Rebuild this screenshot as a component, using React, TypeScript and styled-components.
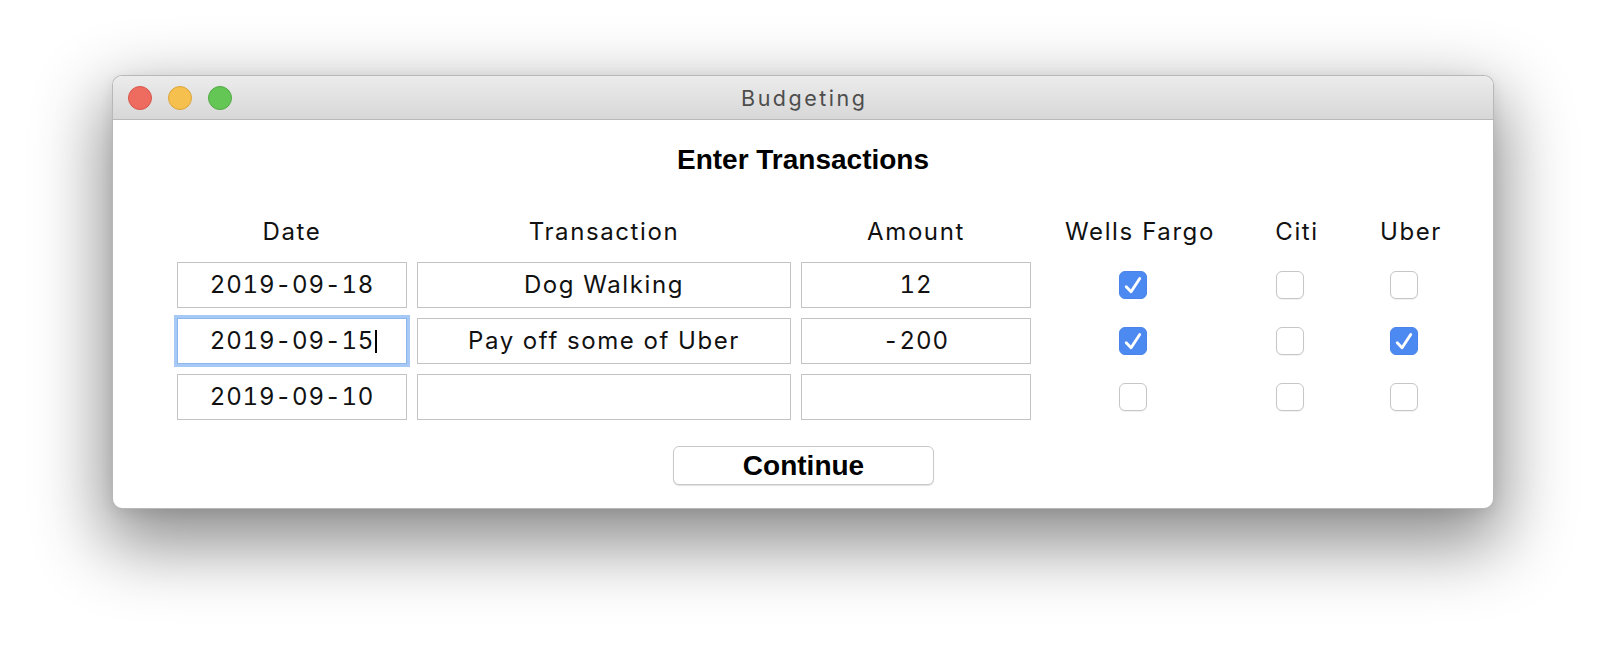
import React from 'react';
import styled, { createGlobalStyle } from 'styled-components';

/** Global */
const GlobalStyle = createGlobalStyle`
  html, body {
    margin: 0;
    padding: 0;
    background: #ffffff;
  }
  body {
    font-family: Inter, "Liberation Sans", sans-serif;
  }
`;

/** Desktop + window */
const Desktop = styled.div`
  width: 1606px;
  height: 656px;
  padding: 75px 0 0 112px;
  box-sizing: border-box;
  overflow: hidden;
`;

const Window = styled.div`
  width: 1382px;
  box-sizing: border-box;
  border: 1px solid rgba(0, 0, 0, 0.28);
  border-radius: 10px;
  background: #ffffff;
  overflow: hidden;
  box-shadow: 0 28px 70px 8px rgba(0, 0, 0, 0.45), 0 4px 14px rgba(0, 0, 0, 0.08);
`;

const TitleBar = styled.div`
  position: relative;
  height: 43px;
  display: flex;
  align-items: center;
  justify-content: center;
  background: linear-gradient(#ececec, #d7d7d7);
  border-bottom: 1px solid #b8b8b8;
`;

const Lights = styled.div`
  position: absolute;
  left: 15px;
  top: 0;
  bottom: 0;
  display: flex;
  align-items: center;
  gap: 16px;
`;

const Light = styled.span<{ $fill: string; $edge: string }>`
  width: 24px;
  height: 24px;
  border-radius: 50%;
  box-sizing: border-box;
  background: ${p => p.$fill};
  border: 1px solid ${p => p.$edge};
`;

const WindowTitle = styled.span`
  font-family: Inter, "Liberation Sans", sans-serif;
  font-size: 21.5px;
  letter-spacing: 2.5px;
  margin-right: -2.5px;
  color: #4d4d4d;
  line-height: 24px;
`;

const Body = styled.div`
  padding: 23px 0 23px;
  display: flex;
  flex-direction: column;
  align-items: stretch;
`;

const Heading = styled.h1`
  margin: 0;
  text-align: center;
  font-family: "Liberation Sans", Arial, sans-serif;
  font-weight: bold;
  font-size: 28px;
  line-height: 34px;
  color: #000;
`;

/** Table of transactions */
const Table = styled.div`
  margin: 41px 0 0 59px;
  display: grid;
  grid-template-columns: 240px 384px 240px 208px 106px 122px;
  row-gap: 10px;
  font-family: Inter, "Liberation Sans", sans-serif;
  font-size: 24px;
  letter-spacing: 1.6px;
  color: #111;
`;

const HeaderCell = styled.div`
  text-align: center;
  line-height: 28px;
  padding-bottom: 6px;
  white-space: nowrap;
`;

const EntryCell = styled.div`
  padding: 0 5px;
`;

const Entry = styled.div<{ $focused?: boolean; $numeric?: boolean }>`
  height: 46px;
  box-sizing: border-box;
  display: flex;
  align-items: center;
  justify-content: center;
  line-height: 28px;
  white-space: nowrap;
  letter-spacing: ${p => (p.$numeric ? '0.9px' : '1.6px')};
  font-variant-numeric: tabular-nums;
  border: 1px solid ${p => (p.$focused ? '#8db7ee' : '#c3c3c3')};
  box-shadow: ${p => (p.$focused ? '0 0 0 3px #a6c9f5' : 'none')};
  background: #fff;
`;

const Caret = styled.span`
  display: inline-block;
  width: 2px;
  height: 23px;
  background: #000;
  margin-left: 1px;
  margin-right: -3px;
`;

const CheckCell = styled.div`
  display: flex;
  align-items: center;
  justify-content: center;
  padding-right: 15px;
`;

const Box = styled.span<{ $checked: boolean }>`
  width: 28px;
  height: 28px;
  box-sizing: border-box;
  border-radius: 6px;
  display: flex;
  align-items: center;
  justify-content: center;
  background: ${p => (p.$checked ? '#4c89f1' : '#ffffff')};
  border: 1px solid ${p => (p.$checked ? '#4a84ea' : '#c6c6c6')};
  box-shadow: ${p => (p.$checked ? 'none' : '0 1px 1px rgba(0,0,0,0.06)')};
`;

const Footer = styled.div`
  margin-top: 26px;
  display: flex;
  justify-content: center;
  padding-left: 1px;
`;

const ContinueButton = styled.button`
  width: 261px;
  height: 39px;
  box-sizing: border-box;
  padding: 0;
  border: 1px solid #c9c9c9;
  border-radius: 6px;
  background: #fff;
  box-shadow: 0 1px 1px rgba(0, 0, 0, 0.12);
  font-family: "Liberation Sans", Arial, sans-serif;
  font-weight: bold;
  font-size: 28px;
  line-height: 37px;
  color: #000;
`;

function Check({ checked }: { checked: boolean }) {
  return (
    <Box $checked={checked}>
      {checked && (
        <svg width="28" height="28" viewBox="0 0 28 28" style={{ marginLeft: -1, marginTop: -1 }}>
          <path
            d="M7.5 15.8 L12.5 21 L21.5 7.2"
            fill="none"
            stroke="#fff"
            strokeWidth="3"
            strokeLinecap="round"
            strokeLinejoin="round"
          />
        </svg>
      )}
    </Box>
  );
}

interface Row {
  date: string;
  text: string;
  amount: string;
  accounts: boolean[];
  focused?: boolean;
}

const headers = ['Date', 'Transaction', 'Amount', 'Wells Fargo', 'Citi', 'Uber'];

const rows: Row[] = [
  { date: '2019-09-18', text: 'Dog Walking', amount: '12', accounts: [true, false, false] },
  { date: '2019-09-15', text: 'Pay off some of Uber', amount: '-200', accounts: [true, false, true], focused: true },
  { date: '2019-09-10', text: '', amount: '', accounts: [false, false, false] },
];

export default function App() {
  return (
    <>
      <GlobalStyle />
      <Desktop>
        <Window>
          <TitleBar>
            <Lights>
              <Light $fill="#ee6b60" $edge="#d8564b" />
              <Light $fill="#f6c04f" $edge="#dca63c" />
              <Light $fill="#63c655" $edge="#53aa45" />
            </Lights>
            <WindowTitle>Budgeting</WindowTitle>
          </TitleBar>
          <Body>
            <Heading>Enter Transactions</Heading>
            <Table>
              {headers.map(h => (
                <HeaderCell key={h}>{h}</HeaderCell>
              ))}
              {rows.map(r => (
                <React.Fragment key={r.date}>
                  <EntryCell>
                    <Entry $focused={r.focused} $numeric>
                      {r.date}
                      {r.focused && <Caret />}
                    </Entry>
                  </EntryCell>
                  <EntryCell>
                    <Entry>{r.text}</Entry>
                  </EntryCell>
                  <EntryCell>
                    <Entry $numeric>{r.amount}</Entry>
                  </EntryCell>
                  {r.accounts.map((c, i) => (
                    <CheckCell key={i}>
                      <Check checked={c} />
                    </CheckCell>
                  ))}
                </React.Fragment>
              ))}
            </Table>
            <Footer>
              <ContinueButton>Continue</ContinueButton>
            </Footer>
          </Body>
        </Window>
      </Desktop>
    </>
  );
}
